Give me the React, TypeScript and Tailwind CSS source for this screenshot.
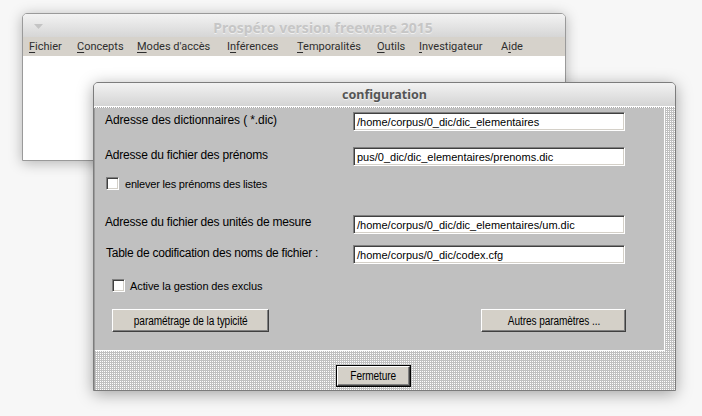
import React from "react";

const sunken =
  "border border-t-[#808080] border-l-[#808080] border-b-white border-r-white shadow-[inset_1px_1px_0_#404040,inset_-1px_-1px_0_#d4d0c8]";
const raised =
  "border border-t-white border-l-white border-b-[#404040] border-r-[#404040] shadow-[inset_-1px_-1px_0_#808080] bg-[#d4d0c8] text-[12px] text-black flex items-center justify-center whitespace-nowrap";

function Field({ value }: { value: string }) {
  return (
    <div
      className={`w-[272px] h-[19px] shrink-0 bg-white ${sunken} pl-[3px] flex items-center text-[11px] text-black overflow-hidden whitespace-nowrap`}
    >
      {value}
    </div>
  );
}

function Check() {
  return <div className={`w-[13px] h-[13px] shrink-0 bg-white ${sunken}`} />;
}

function BtnText({ children }: { children: React.ReactNode }) {
  return <span className="inline-block scale-x-[0.84] tracking-[-0.1px]">{children}</span>;
}

function MenuItem({ pre, u, post, w }: { pre: string; u: string; post: string; w: string }) {
  return (
    <span className={`${w} shrink-0 whitespace-nowrap`}>
      {pre}
      <span className="underline underline-offset-2">{u}</span>
      {post}
    </span>
  );
}

export default function App() {
  return (
    <div
      className="relative w-[702px] h-[416px] overflow-hidden bg-[#f7f7f7]"
      style={{ fontFamily: '"Liberation Sans", Arial, sans-serif' }}
    >
      {/* Main window */}
      <div className="absolute left-[22px] top-[13px] w-[544px] h-[148px] border border-[#9a9a9a] rounded-t-[5px] bg-white shadow-[0_2px_14px_rgba(0,0,0,0.28)] flex flex-col overflow-hidden">
        <div className="h-[23px] shrink-0 bg-[linear-gradient(#f3f3f3,#d6d6d6)] flex items-center">
          <svg className="ml-[11px] mt-[2px]" width="9" height="6" viewBox="0 0 9 6">
            <path d="M0 0 L9 0 L4.5 5 Z" fill="#c4c4c4" />
          </svg>
          <div
            className="flex-1 text-center pl-[38px] pt-[3px] text-[14px] font-bold text-[#c6c6c6] [text-shadow:0_1px_0_rgba(255,255,255,0.6)]"
            style={{ fontFamily: '"Noto Sans", sans-serif' }}
          >
            Prospéro version freeware 2015
          </div>
        </div>
        <div
          className="h-[19px] shrink-0 bg-[#d6d2cb] flex items-center pl-[6px] pt-[2px] text-[11px] text-[#2e2e2e]"
          style={{ fontFamily: 'Roboto, sans-serif' }}
        >
          <MenuItem pre="" u="F" post="ichier" w="w-[48px]" />
          <MenuItem pre="" u="C" post="oncepts" w="w-[60px]" />
          <MenuItem pre="" u="M" post="odes d'accès" w="w-[90px]" />
          <MenuItem pre="I" u="n" post="férences" w="w-[70px]" />
          <MenuItem pre="" u="T" post="emporalités" w="w-[80px]" />
          <MenuItem pre="" u="O" post="utils" w="w-[42px]" />
          <MenuItem pre="" u="I" post="nvestigateur" w="w-[82px]" />
          <MenuItem pre="A" u="i" post="de" w="w-[40px]" />
        </div>
        <div className="flex-1 bg-white" />
      </div>

      {/* Dialog */}
      <div className="absolute left-[93px] top-[82px] w-[583px] h-[309px] border border-[#7c7c7c] rounded-t-[5px] bg-[#c0c0c0] shadow-[0_3px_16px_rgba(0,0,0,0.35)] flex flex-col overflow-hidden">
        <div className="h-[23px] shrink-0 bg-[linear-gradient(#f2f2f2,#d4d4d4)] flex items-center justify-center pt-[2px]">
          <span
            className="text-[12.5px] font-bold text-[#555555] [text-shadow:0_1px_0_rgba(255,255,255,0.6)]"
            style={{ fontFamily: '"Noto Sans", sans-serif' }}
          >
            configuration
          </span>
        </div>
        <div className="h-px shrink-0 bg-white" />
        <div className="h-px shrink-0 bg-[linear-gradient(90deg,#ffffff_50%,#a8a8a8_50%)] bg-[length:2px_1px]" />
        <div className="flex-1 flex flex-col bg-[conic-gradient(#c0c0c0_25%,#ffffff_0_50%,#c0c0c0_0)] bg-[length:2px_2px] border-l border-[#9c9c9c]">
          {/* inner panel */}
          <div className="w-[570px] h-[243px] shrink-0 bg-[#c0c0c0] border-r border-b border-white flex flex-col text-[12px] leading-[14px] text-black">
            <div className="flex items-start h-[19px] mt-[4px]">
              <span className="ml-[10px] w-[248px] mt-[1px] tracking-[-0.1px]">Adresse des dictionnaires ( *.dic)</span>
              <Field value="/home/corpus/0_dic/dic_elementaires" />
            </div>
            <div className="flex items-start h-[19px] mt-[16px]">
              <span className="ml-[10px] w-[248px] mt-[1px] tracking-[-0.2px]">Adresse du fichier des prénoms</span>
              <Field value="pus/0_dic/dic_elementaires/prenoms.dic" />
            </div>
            <div className="flex items-center h-[13px] mt-[11px] ml-[11px]">
              <Check />
              <span className="ml-[6px] text-[11px] tracking-[-0.2px]">enlever les prénoms des listes</span>
            </div>
            <div className="flex items-start h-[19px] mt-[25px]">
              <span className="ml-[10px] w-[248px] tracking-[-0.2px]">Adresse du fichier des unités de mesure</span>
              <Field value="/home/corpus/0_dic/dic_elementaires/um.dic" />
            </div>
            <div className="flex items-start h-[19px] mt-[11px]">
              <span className="ml-[11px] w-[247px] mt-[1px] tracking-[-0.25px]">Table de codification des noms de fichier :</span>
              <Field value="/home/corpus/0_dic/codex.cfg" />
            </div>
            <div className="flex items-center h-[13px] mt-[15px] ml-[17px]">
              <Check />
              <span className="ml-[5px] text-[11px] tracking-[-0.1px]">Active la gestion des exclus</span>
            </div>
            <div className="flex items-center justify-between mt-[17px] ml-[17px] mr-[38px]">
              <button className={`w-[157px] h-[23px] ${raised}`}>
                <BtnText>paramétrage de la typicité</BtnText>
              </button>
              <button className={`w-[145px] h-[23px] ${raised}`}>
                <BtnText>Autres paramètres ...</BtnText>
              </button>
            </div>
          </div>
          <div className="flex-1 flex items-start pl-[241px] pt-[14px]">
            <div className="border border-black">
              <button className={`w-[73px] h-[20px] ${raised}`}>
                <BtnText>Fermeture</BtnText>
              </button>
            </div>
          </div>
        </div>
      </div>
    </div>
  );
}
